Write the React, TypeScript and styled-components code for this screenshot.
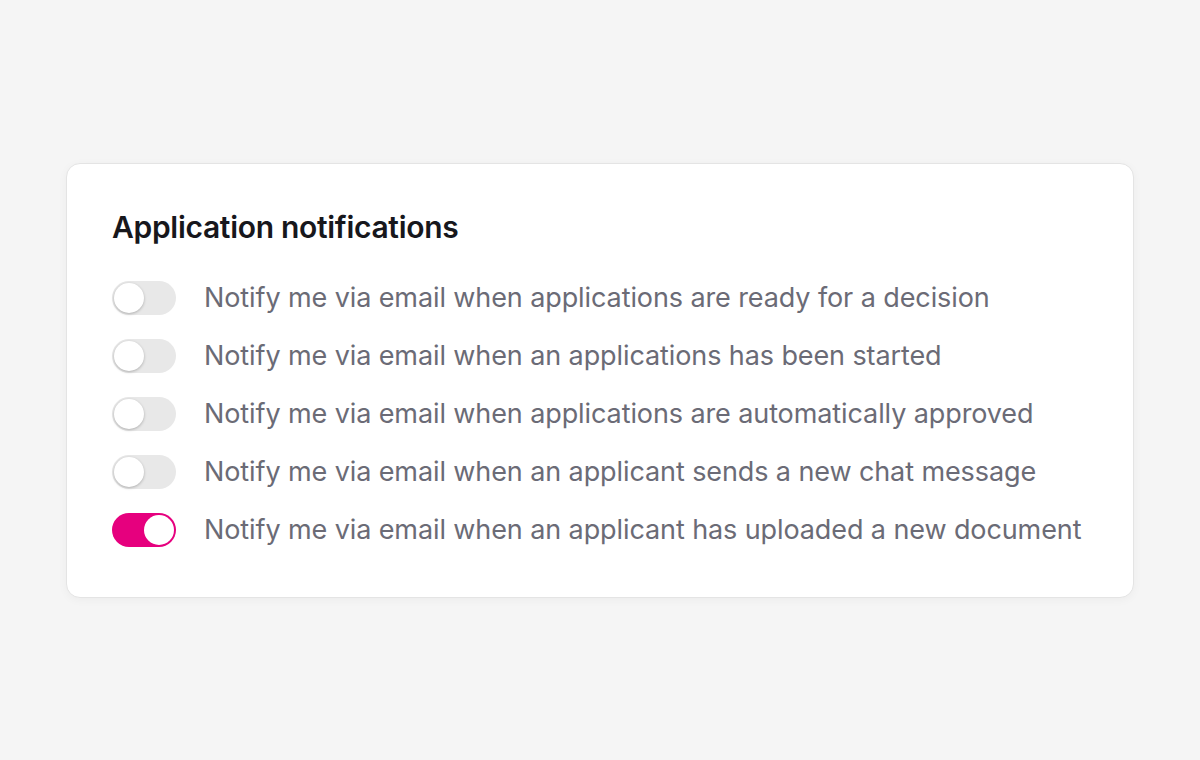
import { useState } from "react";
import styled, { createGlobalStyle } from "styled-components";

const GlobalStyle = createGlobalStyle`
  html, body {
    margin: 0;
    padding: 0;
    background: #f5f5f5;
    font-family: Inter, "Noto Sans", sans-serif;
  }
`;

const Page = styled.div`
  width: 1200px;
  height: 760px;
  box-sizing: border-box;
  padding-top: 163px;
  display: flex;
  justify-content: center;
  align-items: flex-start;
`;

const Card = styled.section`
  width: 1068px;
  box-sizing: border-box;
  padding: 43px 45px 50px;
  background: #ffffff;
  border: 1px solid #e4e4e4;
  border-radius: 14px;
  box-shadow: 0 2px 10px rgba(0, 0, 0, 0.04);
`;

const Title = styled.h2`
  margin: 0 0 34px;
  font-size: 30px;
  font-weight: 600;
  color: #17171c;
  letter-spacing: -0.3px;
  line-height: 40px;
`;

const List = styled.div`
  display: flex;
  flex-direction: column;
  gap: 24px;
`;

const Row = styled.label`
  display: flex;
  align-items: center;
  gap: 28px;
  cursor: pointer;
`;

const Track = styled.span<{ $on: boolean }>`
  position: relative;
  flex: none;
  width: 64px;
  height: 34px;
  border-radius: 17px;
  background: ${(p) => (p.$on ? "#e6007e" : "#e8e8e8")};
  transition: background 0.2s;
`;

const Knob = styled.span<{ $on: boolean }>`
  position: absolute;
  top: 2px;
  left: ${(p) => (p.$on ? "32px" : "2px")};
  width: 30px;
  height: 30px;
  border-radius: 50%;
  background: #ffffff;
  box-shadow: ${(p) => (p.$on ? "none" : "0 1px 3px rgba(0, 0, 0, 0.25)")};
  transition: left 0.2s;
`;

const Label = styled.span`
  font-size: 27px;
  line-height: 34px;
  color: #6b6b76;
  letter-spacing: -0.1px;
`;

const items = [
  "Notify me via email when applications are ready for a decision",
  "Notify me via email when an applications has been started",
  "Notify me via email when applications are automatically approved",
  "Notify me via email when an applicant sends a new chat message",
  "Notify me via email when an applicant has uploaded a new document",
];

export default function App() {
  const [on, setOn] = useState([false, false, false, false, true]);
  return (
    <>
      <GlobalStyle />
      <Page>
        <Card>
          <Title>Application notifications</Title>
          <List>
            {items.map((text, i) => (
              <Row
                key={text}
                onClick={() => setOn(on.map((v, j) => (j === i ? !v : v)))}
              >
                <Track $on={on[i]}>
                  <Knob $on={on[i]} />
                </Track>
                <Label>{text}</Label>
              </Row>
            ))}
          </List>
        </Card>
      </Page>
    </>
  );
}
